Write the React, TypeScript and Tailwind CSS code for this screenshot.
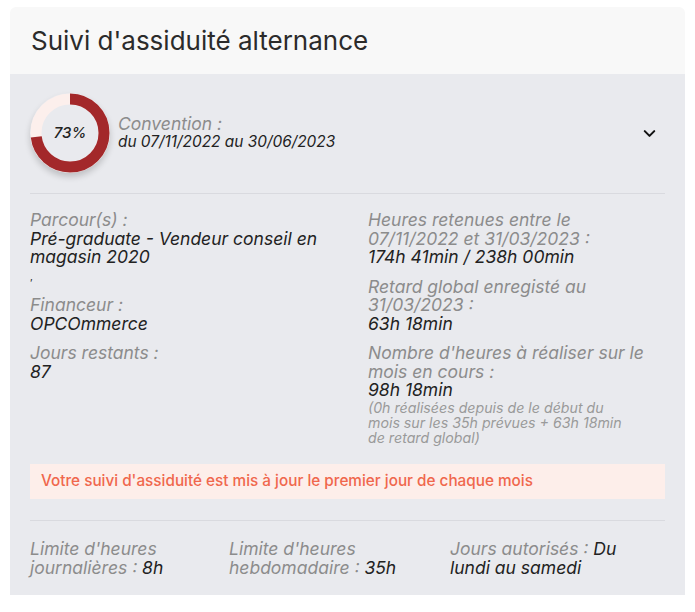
import { ChevronDown } from "lucide-react";

const font = { fontFamily: "Inter, 'Noto Sans', sans-serif" };

function Donut({ percent }: { percent: number }) {
  const r = 34;
  const c = 2 * Math.PI * r;
  return (
    <div className="relative w-[80px] h-[80px] shrink-0 rounded-full shadow-[0_4px_6px_rgba(0,0,0,0.18)]">
      <svg width="80" height="80" viewBox="0 0 80 80" className="-rotate-90">
        <circle cx="40" cy="40" r={r} fill="none" stroke="#fcefec" strokeWidth="11" />
        <circle
          cx="40"
          cy="40"
          r={r}
          fill="none"
          stroke="#a3282a"
          strokeWidth="11"
          strokeDasharray={`${(c * percent) / 100} ${c}`}
        />
      </svg>
      <div className="absolute inset-0 flex items-center justify-center text-[15px] italic font-medium text-[#222]">
        {percent}%
      </div>
    </div>
  );
}

function Field({ label, children }: { label: React.ReactNode; children: React.ReactNode }) {
  return (
    <div className="text-[17.5px] leading-[18.5px] italic">
      <div className="text-[#8c8c8c]">{label}</div>
      <div className="text-[#222]">{children}</div>
    </div>
  );
}

export default function App() {
  return (
    <div className="min-h-screen bg-white pt-[7px] pl-[10px]" style={font}>
      <div className="w-[675px]">
        <div className="h-[67px] flex items-center px-[21px] bg-[#f8f8f8] rounded-t-md">
          <h2 className="text-[26px] text-[#2b2b2b]">Suivi d'assiduité alternance</h2>
        </div>
        <div className="bg-[#e9eaee] px-[20px] pt-[19px] pb-[18px]">
          <div className="flex items-center gap-[8px]">
            <Donut percent={73} />
            <div className="flex-1 italic">
              <div className="text-[17.5px] leading-[18px] text-[#8c8c8c]">Convention :</div>
              <div className="text-[15.4px] leading-[18px] text-[#222]">du 07/11/2022 au 30/06/2023</div>
            </div>
            <ChevronDown size={19} strokeWidth={2.6} className="mr-[6px] text-[#111]" />
          </div>

          <div className="mt-[20px] border-t border-[#d9dadf] pt-[17px] grid grid-cols-[338px_285px]">
            <div className="flex flex-col gap-[11px]">
              <Field label="Parcour(s) :">
                Pré-graduate - Vendeur conseil en magasin 2020
                <div className="text-[10px] leading-[18.5px] not-italic">,</div>
              </Field>
              <Field label="Financeur :">OPCOmmerce</Field>
              <Field label="Jours restants :">87</Field>
            </div>
            <div className="flex flex-col gap-[11px]">
              <Field label="Heures retenues entre le 07/11/2022 et 31/03/2023 :">174h 41min / 238h 00min</Field>
              <Field label="Retard global enregisté au 31/03/2023 :">63h 18min</Field>
              <Field label="Nombre d'heures à réaliser sur le mois en cours :">
                98h 18min
                <div className="text-[14.2px] leading-[15px] text-[#9a9a9a]">
                  (0h réalisées depuis de le début du
                  <br />
                  mois sur les 35h prévues + 63h 18min
                  <br />
                  de retard global)
                </div>
              </Field>
            </div>
          </div>

          <div className="mt-[19px] h-[35px] flex items-center px-[11px] bg-[#fdeeea] text-[15.3px] font-medium text-[#f0674d]">
            Votre suivi d'assiduité est mis à jour le premier jour de chaque mois
          </div>

          <div className="mt-[21px] border-t border-[#d9dadf] pt-[18px] grid grid-cols-[199px_221px_200px] text-[17.5px] leading-[19px] italic">
            <div>
              <span className="text-[#8c8c8c]">Limite d'heures journalières : </span>
              <span className="text-[#222]">8h</span>
            </div>
            <div>
              <span className="text-[#8c8c8c]">Limite d'heures hebdomadaire : </span>
              <span className="text-[#222]">35h</span>
            </div>
            <div>
              <span className="text-[#8c8c8c]">Jours autorisés : </span>
              <span className="text-[#222]">Du lundi au samedi</span>
            </div>
          </div>
        </div>
      </div>
    </div>
  );
}
